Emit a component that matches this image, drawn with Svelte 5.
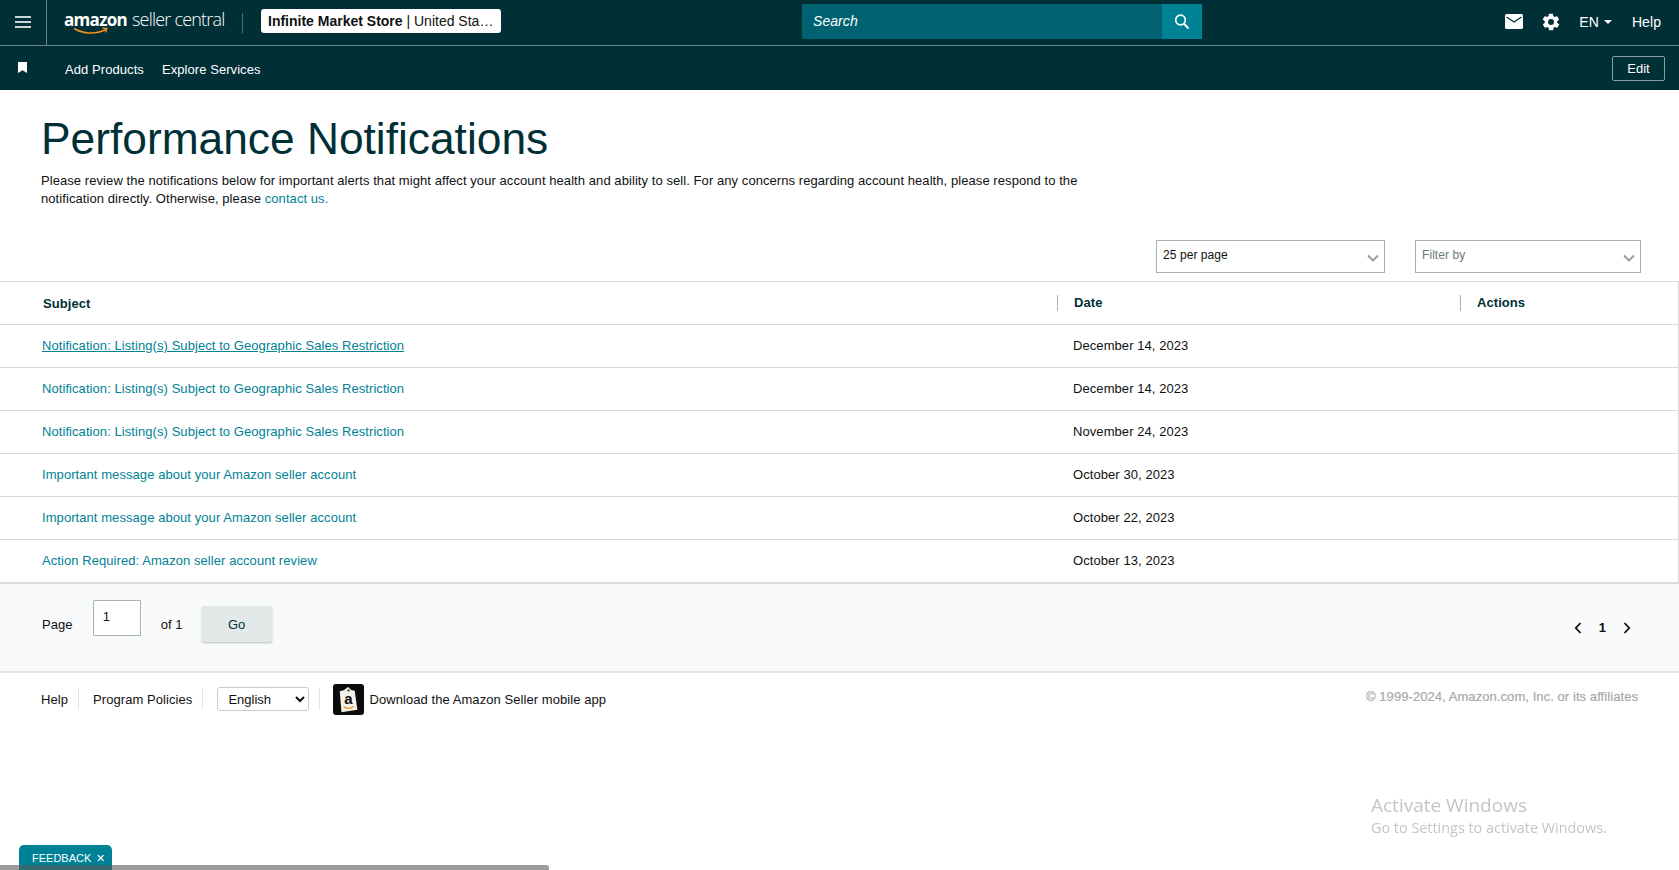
<script>
  const rows = [
    { subject: 'Notification: Listing(s) Subject to Geographic Sales Restriction', date: 'December 14, 2023', hover: true },
    { subject: 'Notification: Listing(s) Subject to Geographic Sales Restriction', date: 'December 14, 2023' },
    { subject: 'Notification: Listing(s) Subject to Geographic Sales Restriction', date: 'November 24, 2023' },
    { subject: 'Important message about your Amazon seller account', date: 'October 30, 2023' },
    { subject: 'Important message about your Amazon seller account', date: 'October 22, 2023' },
    { subject: 'Action Required: Amazon seller account review', date: 'October 13, 2023' }
  ];
</script>

<header class="topbar">
  <button class="burger" aria-label="Menu">
    <svg width="18" height="14" viewBox="0 0 18 14"><path d="M1 2h16M1 7h16M1 12h16" stroke="#fff" stroke-width="2" opacity=".8" /></svg>
  </button>
  <div class="brand">
    <div class="logo">
      <span class="logo-amazon">amazon</span><span class="logo-rest">seller central</span>
      <svg class="smile" width="36" height="9" viewBox="0 0 36 9"><path d="M1 1.500C10 7 23 7.500 33 2.500" fill="none" stroke="#f08f1e" stroke-width="1.600" /><path d="M29.500 1l4.500.6-1.500 4" fill="none" stroke="#f08f1e" stroke-width="1.300" /></svg>
    </div>
  </div>
  <span class="brand-sep"></span>
  <div class="store"><b>Infinite Market Store</b> | United Sta…</div>
  <div class="search">
    <span class="search-text">Search</span>
    <button class="search-btn" aria-label="Search">
      <svg width="18" height="18" viewBox="0 0 18 18" fill="none" stroke="#fff"><circle cx="7.500" cy="7" r="4.800" stroke-width="1.700" /><path d="M11 10.700l4.500 4.800" stroke-width="2" /></svg>
    </button>
  </div>
  <div class="top-right">
    <svg width="18" height="15" viewBox="0 0 18 15"><rect width="18" height="15" rx="1.500" fill="#fff" /><path d="M1.500 3L9 8l7.500-5" fill="none" stroke="#002f36" stroke-width="1.300" /></svg>
    <svg class="gear" width="20" height="20" viewBox="0 0 24 24"><path fill="#fff" d="M19.400 13a7.500 7.500 0 0 0 0-2l2.100-1.600a.5.500 0 0 0 .1-.6l-2-3.500a.5.500 0 0 0-.6-.2l-2.500 1a7.300 7.300 0 0 0-1.700-1l-.4-2.700a.5.500 0 0 0-.5-.4h-4a.5.500 0 0 0-.5.400l-.4 2.700a7.300 7.300 0 0 0-1.700 1l-2.500-1a.5.500 0 0 0-.6.200l-2 3.500a.5.500 0 0 0 .1.600L4.600 11a7.500 7.500 0 0 0 0 2l-2.100 1.600a.5.500 0 0 0-.1.600l2 3.500a.5.500 0 0 0 .6.200l2.500-1a7.300 7.300 0 0 0 1.700 1l.4 2.700a.5.500 0 0 0 .5.400h4a.5.500 0 0 0 .5-.4l.4-2.700a7.300 7.300 0 0 0 1.700-1l2.500 1a.5.500 0 0 0 .6-.2l2-3.500a.5.500 0 0 0-.1-.6zM12 15.500a3.500 3.500 0 1 1 0-7 3.500 3.500 0 0 1 0 7z" /></svg>
    <span class="lang">EN <i class="caret"></i></span>
    <span class="top-help">Help</span>
  </div>
</header>

<nav class="subbar">
  <svg class="bookmark" width="9" height="11" viewBox="0 0 9 11"><path d="M0 0h9v11L4.500 8.200 0 11z" fill="#fff" /></svg>
  <a href="#add">Add Products</a>
  <a href="#explore">Explore Services</a>
  <button class="edit">Edit</button>
</nav>

<main>
  <section class="intro">
    <h1>Performance Notifications</h1>
    <p>Please review the notifications below for important alerts that might affect your account health and ability to sell. For any concerns regarding account health, please respond to the notification directly. Otherwise, please <a href="#contact">contact us.</a></p>
  </section>

  <div class="filters">
    <div class="select per-page">25 per page
      <svg width="12" height="8" viewBox="0 0 12 8"><path d="M1 1.500l5 5 5-5" fill="none" stroke="#8c9c9f" stroke-width="1.800" /></svg>
    </div>
    <div class="select filter">Filter by
      <svg width="12" height="8" viewBox="0 0 12 8"><path d="M1 1.500l5 5 5-5" fill="none" stroke="#8c9c9f" stroke-width="1.800" /></svg>
    </div>
  </div>

  <div class="table">
    <div class="row head">
      <div class="c-subject">Subject</div>
      <div class="c-date"><span>Date</span></div>
      <div class="c-actions"><span>Actions</span></div>
    </div>
    {#each rows as row}
      <div class="row body">
        <div class="c-subject"><a href="#row" class:hover={row.hover}>{row.subject}</a></div>
        <div class="c-date">{row.date}</div>
        <div class="c-actions"></div>
      </div>
    {/each}
  </div>

  <div class="pager">
    <span class="page-label">Page</span>
    <div class="page-input">1</div>
    <span class="page-of">of 1</span>
    <button class="go">Go</button>
    <div class="page-nav">
      <svg width="8" height="12" viewBox="0 0 8 12"><path d="M6.500 1L1.800 6l4.700 5" fill="none" stroke="#0f1111" stroke-width="1.800" /></svg>
      <b>1</b>
      <svg width="8" height="12" viewBox="0 0 8 12"><path d="M1.500 1l4.700 5-4.700 5" fill="none" stroke="#0f1111" stroke-width="1.800" /></svg>
    </div>
  </div>

  <footer>
    <a href="#help" class="foot-link">Help</a>
    <span class="foot-sep"></span>
    <a href="#policies" class="foot-link">Program Policies</a>
    <span class="foot-sep"></span>
    <select class="lang-select"><option>English</option></select>
    <span class="foot-sep"></span>
    <svg class="app-icon" width="31" height="31" viewBox="0 0 31 31">
      <rect width="31" height="31" rx="3" fill="#0b0b0b" />
      <path d="M15.500 3l3 3 3.500 1 2 19-16 2-1-21 4-1z" fill="#f4f1e8" transform="rotate(-2 15 15)" />
      <circle cx="15.500" cy="6.500" r="1" fill="#0b0b0b" />
      <text x="15.500" y="20" class="app-a">a</text>
      <path d="M10.500 22.500c3 2.200 7 2.200 10 0" fill="none" stroke="#f08f1e" stroke-width="1.300" />
    </svg>
    <span class="app-text">Download the Amazon Seller mobile app</span>
    <span class="copyright">© 1999-2024, Amazon.com, Inc. or its affiliates</span>
  </footer>
</main>

<div class="activate">
  <div class="activate-title">Activate Windows</div>
  <div class="activate-sub">Go to Settings to activate Windows.</div>
</div>

<div class="feedback">FEEDBACK <span>✕</span></div>
<div class="scrollbar"></div>

<style>
  :global(body) {
    margin: 0;
    background: #fff;
    font-family: "Liberation Sans", Arial, sans-serif;
    font-size: 13px;
    letter-spacing: 0.07px;
    color: #0f1111;
    overflow: hidden;
    height: 870px;
  }

  a {
    color: #008296;
    text-decoration: none;
  }

  button {
    font-family: inherit;
  }

  .topbar {
    display: flex;
    align-items: center;
    height: 45px;
    background: #002f36;
    border-bottom: 1px solid #6b8589;
    color: #fff;
  }

  .burger {
    width: 47px;
    height: 45px;
    padding: 0 0 2px;
    background: none;
    border: 0;
    border-right: 1px solid #6b8589;
    display: flex;
    align-items: center;
    justify-content: center;
    flex: none;
  }

  .brand {
    padding-left: 17px;
    width: 179px;
    flex: none;
  }

  .logo {
    position: relative;
    white-space: nowrap;
    height: 26px;
    line-height: 24px;
    margin-top: -5px;
  }

  .logo-amazon {
    font-family: "Open Sans", sans-serif;
    font-size: 17px;
    font-weight: 700;
    letter-spacing: -0.7px;
  }

  .logo-rest {
    font-family: "Open Sans", sans-serif;
    font-size: 18px;
    font-weight: 300;
    letter-spacing: -0.8px;
    margin-left: 5px;
  }

  .smile {
    position: absolute;
    left: 9px;
    top: 20px;
  }

  .brand-sep {
    width: 1px;
    height: 20px;
    background: #4d6d72;
    margin-right: 18px;
    margin-left: -1px;
    flex: none;
  }

  .store {
    width: 240px;
    height: 24px;
    line-height: 24px;
    box-sizing: border-box;
    padding-left: 7px;
    background: #fff;
    border-radius: 3px;
    color: #0f1111;
    font-size: 14px;
    letter-spacing: 0;
    white-space: nowrap;
    flex: none;
    margin-right: 301px;
    margin-top: -4px;
  }

  .search {
    display: flex;
    width: 400px;
    height: 35px;
    background: #006170;
    flex: none;
    margin-top: -2px;
  }

  .search-text {
    flex: 1;
    line-height: 35px;
    padding-left: 11px;
    font-style: italic;
    font-size: 14px;
    color: #fff;
  }

  .search-btn {
    width: 40px;
    background: #008296;
    border: 0;
    padding: 0;
    display: flex;
    align-items: center;
    justify-content: center;
  }

  .top-right {
    margin-left: auto;
    display: flex;
    align-items: center;
    padding-right: 18px;
    font-size: 14px;
    margin-top: -2px;
  }

  .gear {
    margin-left: 18px;
  }

  .lang {
    margin-left: 18px;
    display: flex;
    align-items: center;
    gap: 5px;
  }

  .caret {
    width: 0;
    height: 0;
    border: 4px solid transparent;
    border-top-color: #fff;
    border-bottom: 0;
  }

  .top-help {
    margin-left: 20px;
  }

  .subbar {
    display: flex;
    align-items: center;
    height: 42px;
    background: #002f36;
    padding: 2px 14px 0 18px;
  }

  .subbar a {
    color: #fff;
    font-size: 13px;
    margin-right: 18px;
  }

  .bookmark {
    margin-right: 38px;
    margin-top: -4px;
  }

  .edit {
    margin-left: auto;
    width: 53px;
    height: 25px;
    margin-top: -2px;
    background: none;
    border: 1px solid #8a9fa2;
    border-radius: 2px;
    color: #fff;
    font-size: 13px;
    padding: 0;
  }

  .intro {
    padding: 0 41px;
  }

  h1 {
    margin: 0;
    padding-top: 23px;
    font-size: 44.300px;
    line-height: 52px;
    font-weight: 400;
    letter-spacing: 0;
    color: #002f36;
  }

  .intro p {
    margin: 7px 0 0;
    width: 1050px;
    font-size: 13px;
    line-height: 18px;
  }

  .filters {
    display: flex;
    justify-content: flex-end;
    gap: 30px;
    padding: 32px 38px 8px 0;
  }

  .select {
    position: relative;
    box-sizing: border-box;
    height: 33px;
    border: 1px solid #a6b2b3;
    font-size: 12px;
    line-height: 29px;
    padding-left: 6px;
  }

  .select svg {
    position: absolute;
    right: 5px;
    top: 13px;
  }

  .per-page {
    width: 229px;
  }

  .filter {
    width: 226px;
    color: #6c7778;
  }

  .table {
    border: 1px solid #d5dbdb;
    border-left: 0;
    border-bottom-width: 2px;
  }

  .row {
    display: flex;
    align-items: center;
    height: 42px;
    border-bottom: 1px solid #d5dbdb;
    font-size: 13px;
  }

  .row.body {
    box-sizing: content-box;
    height: 41px;
    padding-bottom: 1px;
  }

  .row:last-child {
    border-bottom: 0;
  }

  .head {
    font-weight: 700;
    color: #002f36;
  }

  .c-subject {
    width: 1057px;
    padding-left: 42px;
    box-sizing: border-box;
    flex: none;
  }

  .head .c-subject {
    padding-left: 43px;
  }

  .c-date {
    width: 403px;
    padding-left: 16px;
    box-sizing: border-box;
    flex: none;
  }

  .head .c-date,
  .head .c-actions {
    padding-left: 0;
  }

  .head .c-date span,
  .head .c-actions span {
    display: block;
    padding-left: 16px;
    border-left: 1px solid #a6b2b3;
    line-height: 16px;
  }

  .hover {
    text-decoration: underline;
  }

  .pager {
    display: flex;
    align-items: flex-start;
    height: 87px;
    background: #f9fafb;
    padding: 0 42px;
  }

  .page-label {
    margin: 33px 20px 0 0;
  }

  .page-input {
    box-sizing: border-box;
    width: 48px;
    height: 36px;
    margin: 16px 0 0;
    border: 1px solid #a6b2b3;
    background: #fff;
    padding: 8px 9px;
    border-radius: 1px;
  }

  .page-of {
    margin: 33px 0 0 20px;
  }

  .go {
    width: 70px;
    height: 36px;
    margin: 22px 0 0 19px;
    border: 0;
    border-radius: 2px;
    background: #e3e9e9;
    box-shadow: 0 1px 2px rgba(0, 0, 0, 0.25);
    font-size: 13px;
    color: #002f36;
    padding: 0;
  }

  .page-nav {
    margin: 36px 0 0 auto;
    display: flex;
    align-items: center;
    gap: 17px;
    padding-right: 6px;
    font-size: 13px;
  }

  footer {
    display: flex;
    align-items: center;
    height: 52px;
    border-top: 2px solid #e3e6e6;
    padding: 0 41px;
    font-size: 13px;
  }

  .foot-link {
    color: #0f1111;
  }

  .foot-sep {
    width: 1px;
    height: 22px;
    background: #e3e6e6;
    margin: 0 11px 0 10px;
  }

  .foot-link:first-child + .foot-sep {
    margin: 0 14px 0 10px;
  }

  .lang-select {
    width: 92px;
    height: 24px;
    font-family: inherit;
    font-size: 13px;
    background: #fff;
    color: #0f1111;
    border: 1px solid #c9cccc;
    border-radius: 3px;
    padding-left: 6px;
    margin-left: 3px;
  }

  .app-icon {
    margin: 0 5px 0 2px;
  }

  .app-a {
    font-family: "Liberation Sans", sans-serif;
    font-size: 15px;
    font-weight: 700;
    text-anchor: middle;
    fill: #0b0b0b;
  }

  .copyright {
    margin-left: auto;
    color: #a6a9ab;
    font-size: 13px;
    -webkit-text-stroke: 0.2px #a6a9ab;
    margin-top: -6px;
  }

  .activate {
    position: fixed;
    left: 1371px;
    top: 793px;
    color: #c3c5c7;
    font-family: "Open Sans", sans-serif;
    letter-spacing: 0;
  }

  .activate-title {
    font-size: 19px;
    line-height: 24px;
  }

  .activate-sub {
    font-size: 14.400px;
    line-height: 21px;
  }

  .scrollbar {
    position: fixed;
    left: 0;
    bottom: 0;
    width: 549px;
    height: 5px;
    background: rgba(90, 90, 90, 0.6);
    border-radius: 0 3px 0 0;
  }

  .feedback {
    position: fixed;
    left: 19px;
    bottom: 0;
    width: 93px;
    height: 25px;
    box-sizing: border-box;
    padding: 7px 0 0 13px;
    background: #008296;
    border-radius: 5px 5px 0 0;
    color: #fff;
    font-size: 11px;
    letter-spacing: 0;
    white-space: nowrap;
  }

  .feedback span {
    margin-left: 2px;
  }
</style>
